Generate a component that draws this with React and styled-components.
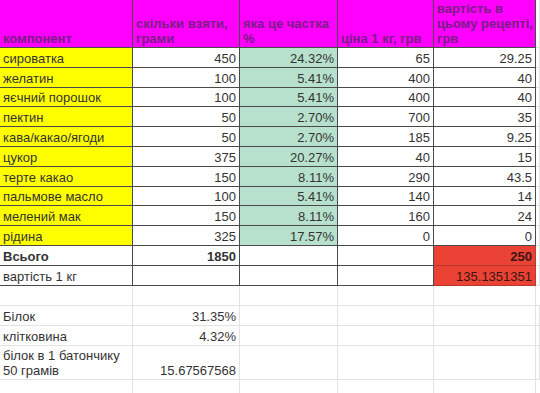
import React from "react";
import styled, { createGlobalStyle } from "styled-components";

const GlobalStyle = createGlobalStyle`
  html, body {
    margin: 0;
    padding: 0;
    background: #fff;
    overflow: hidden;
  }
`;

const ingredients = [
  ["сироватка", "450", "24.32%", "65", "29.25"],
  ["желатин", "100", "5.41%", "400", "40"],
  ["яєчний порошок", "100", "5.41%", "400", "40"],
  ["пектин", "50", "2.70%", "700", "35"],
  ["кава/какао/ягоди", "50", "2.70%", "185", "9.25"],
  ["цукор", "375", "20.27%", "40", "15"],
  ["терте какао", "150", "8.11%", "290", "43.5"],
  ["пальмове масло", "100", "5.41%", "140", "14"],
  ["мелений мак", "150", "8.11%", "160", "24"],
  ["рідина", "325", "17.57%", "0", "0"],
];

const nutrition = [
  ["Білок", "31.35%"],
  ["клітковина", "4.32%"],
  ["білок в 1 батончику\n50 грамів", "15.67567568"],
];

const Sheet = styled.div`
  display: grid;
  grid-template-columns: 133px 107px 98px 96px 102px 4px;
  grid-template-rows: 48px repeat(10, 19.8px) repeat(5, 20px) 34px 20px;
  width: 540px;
  font-family: "Liberation Sans", Arial, sans-serif;
  font-size: 13px;
  color: #333;
`;

const Cell = styled.div`
  box-sizing: border-box;
  display: flex;
  align-items: flex-end;
  justify-content: ${(p) => (p.$right ? "flex-end" : "flex-start")};
  text-align: ${(p) => (p.$right ? "right" : "left")};
  padding: 0 3px 1px 3px;
  line-height: 15px;
  background: ${(p) => p.$bg || "#fff"};
  font-weight: ${(p) => (p.$bold ? 700 : 400)};
  border-right: 1px solid ${(p) => (p.$dark ? "#4a4a4a" : "#e2e2e2")};
  border-bottom: 1px solid ${(p) => (p.$dark ? "#4a4a4a" : "#e2e2e2")};
  white-space: ${(p) => (p.$wrap ? "pre-line" : "nowrap")};
  overflow: hidden;
`;

const HeadCell = styled(Cell)`
  background: #ff00ff;
  color: #7a1d86;
  font-weight: 700;
  white-space: pre-line;
  padding: 0 0 1px 3px;
`;

const RedCell = styled(Cell)`
  background: #ea4335;
  color: #3a1512;
  border-right-color: #c4392c;
  border-bottom-color: #b8362a;
`;

const Spacer = styled(Cell)`
  padding: 0;
`;

const YELLOW = "#ffff00";
const GREEN = "#b7e1cd";

export default function App() {
  return (
    <>
      <GlobalStyle />
      <Sheet>
        <HeadCell $dark>компонент</HeadCell>
        <HeadCell $dark>{"скільки взяти,\nграми"}</HeadCell>
        <HeadCell $dark>{"яка це частка\n%"}</HeadCell>
        <HeadCell $dark>ціна 1 кг, грв</HeadCell>
        <HeadCell $dark>{"вартість в\nцьому рецепті,\nгрв"}</HeadCell>
        <Spacer />

        {ingredients.map(([name, grams, share, price, cost]) => (
          <React.Fragment key={name}>
            <Cell $dark $bg={YELLOW}>{name}</Cell>
            <Cell $dark $right>{grams}</Cell>
            <Cell $dark $right $bg={GREEN}>{share}</Cell>
            <Cell $dark $right>{price}</Cell>
            <Cell $dark $right>{cost}</Cell>
            <Spacer />
          </React.Fragment>
        ))}

        <Cell $dark $bold>Всього</Cell>
        <Cell $dark $bold $right>1850</Cell>
        <Cell $dark />
        <Cell $dark />
        <RedCell $right $bold>250</RedCell>
        <Spacer />

        <Cell $dark>вартість 1 кг</Cell>
        <Cell $dark />
        <Cell $dark />
        <Cell $dark />
        <RedCell $right>135.1351351</RedCell>
        <Spacer />

        {Array.from({ length: 6 }).map((_, i) => (
          <Cell key={"e" + i} />
        ))}

        {nutrition.map(([label, value]) => (
          <React.Fragment key={label}>
            <Cell $wrap>{label}</Cell>
            <Cell $right>{value}</Cell>
            <Cell />
            <Cell />
            <Cell />
            <Spacer />
          </React.Fragment>
        ))}

        {Array.from({ length: 6 }).map((_, i) => (
          <Cell key={"f" + i} />
        ))}
      </Sheet>
    </>
  );
}
